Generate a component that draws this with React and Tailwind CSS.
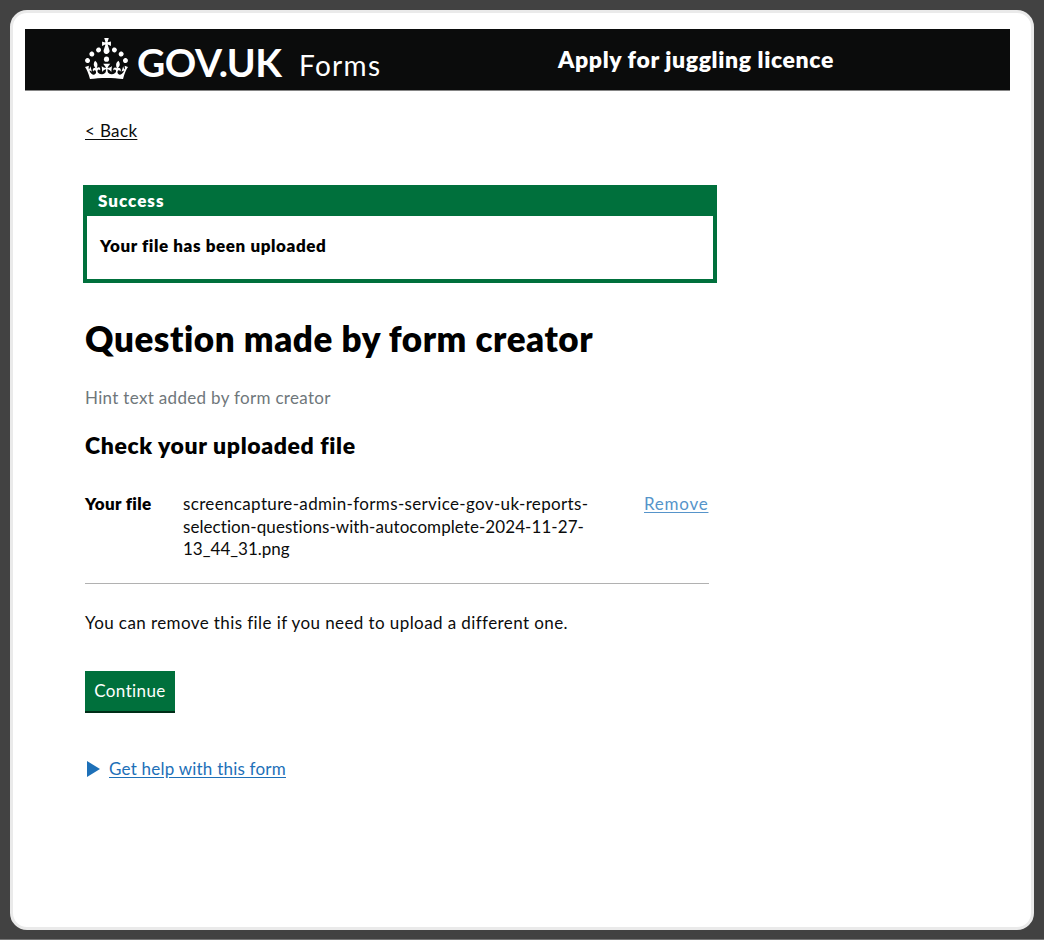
const CROWN =
  'M22.6 10.4c-1 .4-2-.1-2.4-1-.4-.9.1-2 1-2.4.9-.4 2 .1 2.4 1s-.1 2-1 2.4m5 3c-1 .4-2-.1-2.4-1-.4-.9.1-2 1-2.4.9-.4 2 .1 2.4 1s0 2-1 2.4m3.2 4.8c-1 .4-2-.1-2.4-1-.4-.9.1-2 1-2.4.9-.4 2 .1 2.4 1s-.1 2-1 2.4M17 4.7l2.3 1.2V2.5l-2.3.7-.2-.2.9-3h-3.4l.9 3-.2.2c-.1.1-2.3-.7-2.3-.7v3.4L15 4.7c.1.1.1.2.2.2l-1.3 4c-.1.2-.1.4-.1.6 0 1.1.8 2 1.9 2.2h.7c1-.2 1.9-1.1 1.9-2.1 0-.2 0-.4-.1-.6l-1.3-4c-.1-.2 0-.2.1-.3m-7.6 5.7c.9.4 2-.1 2.4-1 .4-.9-.1-2-1-2.4-.9-.4-2 .1-2.4 1s0 2 1 2.4m-5 3c.9.4 2-.1 2.4-1 .4-.9-.1-2-1-2.4-.9-.4-2 .1-2.4 1s.1 2 1 2.4m-3.2 4.8c.9.4 2-.1 2.4-1 .4-.9-.1-2-1-2.4-.9-.4-2 .1-2.4 1s0 2 1 2.4m14.8 11c4.4 0 8.6.3 12.3.8 1.1-4.5 2.4-7 3.7-8.8l-2.5-.9c.2 1.3.3 1.9 0 2.7-.4-.4-.8-1.1-1.1-2.3l-1.2 4c.7-.5 1.3-.8 2-.9-1.1 2.5-2.6 3.1-3.5 3-1.1-.2-1.7-1.2-1.5-2.1.3-1.2 1.5-1.5 2.1-.1 1.1-2.3-.8-3-2-2.3 1.9-1.9 2.1-3.5.6-5.6-2.1 1.6-2.1 3.2-1.2 5.5-1.2-1.4-3.2-.6-2.5 1.6.9-1.4 2.1-.5 1.9.8-.2 1.1-1.7 2.1-3.5 1.9-2.7-.2-2.9-2.1-2.9-3.6.7-.1 1.9.5 2.9 1.9l.4-4.3c-1.1 1.1-2.1 1.4-3.2 1.4.4-1.2 2.1-3 2.1-3h-5.4s1.7 1.9 2.1 3c-1.1 0-2.1-.2-3.2-1.4l.4 4.3c1-1.4 2.2-2 2.9-1.9-.1 1.5-.2 3.4-2.9 3.6-1.9.2-3.4-.8-3.5-1.9-.2-1.3 1-2.2 1.9-.8.7-2.3-1.2-3-2.5-1.6.9-2.2.9-3.9-1.2-5.5-1.5 2-1.3 3.7.6 5.6-1.2-.7-3.1 0-2 2.3.6-1.4 1.8-1.1 2.1.1.2.9-.3 1.9-1.5 2.1-.9.2-2.4-.5-3.5-3 .6 0 1.2.3 2 .9l-1.2-4c-.3 1.1-.7 1.9-1.1 2.3-.3-.8-.2-1.4 0-2.7l-2.9.9C1.3 23 2.6 25.5 3.7 30c3.7-.5 7.9-.8 12.3-.8';

function Header() {
  return (
    <header className="ml-3 mr-[21px] mt-4 flex h-[62px] border-b border-[#858585] bg-[#0b0c0c] pl-[60px] text-white">
      <svg viewBox="0 0 32 30" className="mt-[9px] h-[41px] w-[43px]" fill="currentColor" preserveAspectRatio="none">
        <circle cx="16" cy="15.5" r="1.9" />
        <path d={CROWN} />
      </svg>
      <div className="ml-[9px] w-[162px] whitespace-nowrap text-[39px] leading-[66px] font-bold tracking-[-0.5px]">GOV.UK</div>
      <div className="w-[259px] whitespace-nowrap text-[28px] leading-[72px] tracking-[1.3px]">Forms</div>
      <div className="whitespace-nowrap text-[23px] leading-[61px] font-extrabold tracking-[0.62px]">Apply for juggling licence</div>
    </header>
  );
}

export default function App() {
  return (
    <div className="flex h-[940px] w-[1044px] flex-col border-b border-[#777] bg-[#424242] p-[10px] pb-[9px] font-['Lato',sans-serif] text-[17px] leading-[22px] text-[#0b0c0c]">
      <div className="h-[920px] rounded-[17px] border-[3px] border-[#eaeaea] bg-white">
        <Header />
        <main className="ml-[72px] mt-[29px] flex flex-col items-start whitespace-nowrap">
          <a className="tracking-[0.35px] underline underline-offset-2">&lt; Back</a>

          <section className="-ml-[2px] mt-[43px] h-[98px] w-[634px] border-4 border-t-0 border-[#00703c] font-extrabold">
            <h2 className="-mx-1 h-[31px] bg-[#00703c] pl-[15px] leading-[32px] tracking-[1px] text-white">Success</h2>
            <p className="pl-[13px] pt-[19px] tracking-[0.6px] text-black">Your file has been uploaded</p>
          </section>

          <h1 className="mt-[34px] text-[35px] leading-[42px] font-extrabold tracking-[0.55px] text-black">Question made by form creator</h1>
          <p className="mt-[28px] tracking-[0.32px] text-[#6f777b]">Hint text added by form creator</p>
          <h2 className="mt-[21px] mb-px text-[23px] leading-[30px] font-extrabold tracking-[0.61px] text-black">Check your uploaded file</h2>

          <dl className="mt-[32px] flex h-[91px] w-[624px] border-b border-[#b1b1b1] leading-[22.5px]">
            <dt className="w-[98px] font-extrabold tracking-[0.35px] text-black">Your file</dt>
            <dd className="w-[461px]">
              <span className="tracking-[0.35px]">screencapture-admin-forms-service-gov-uk-reports-</span>
              <br />
              <span className="tracking-[0.07px]">selection-questions-with-autocomplete-2024-11-27-</span>
              <br />
              13_44_31.png
            </dd>
            <dd>
              <a className="tracking-[0.75px] text-[#5694ca] underline underline-offset-2">Remove</a>
            </dd>
          </dl>

          <p className="mt-[28px] tracking-[0.41px]">You can remove this file if you need to upload a different one.</p>
          <button className="mt-[37px] h-[42px] w-[90px] border-b-2 border-[#002d18] bg-[#00703c] text-center leading-[40px] tracking-[0.4px] text-white">
            Continue
          </button>
          <div className="mt-[45px] flex items-center pl-[2px] text-[#1d70b8]">
            <svg viewBox="0 0 13 16" className="mr-[9px] h-4 w-[13px]" fill="currentColor">
              <path d="M0 0L13 8L0 16Z" />
            </svg>
            <a className="tracking-[0.22px] underline underline-offset-2">Get help with this form</a>
          </div>
        </main>
      </div>
    </div>
  );
}
